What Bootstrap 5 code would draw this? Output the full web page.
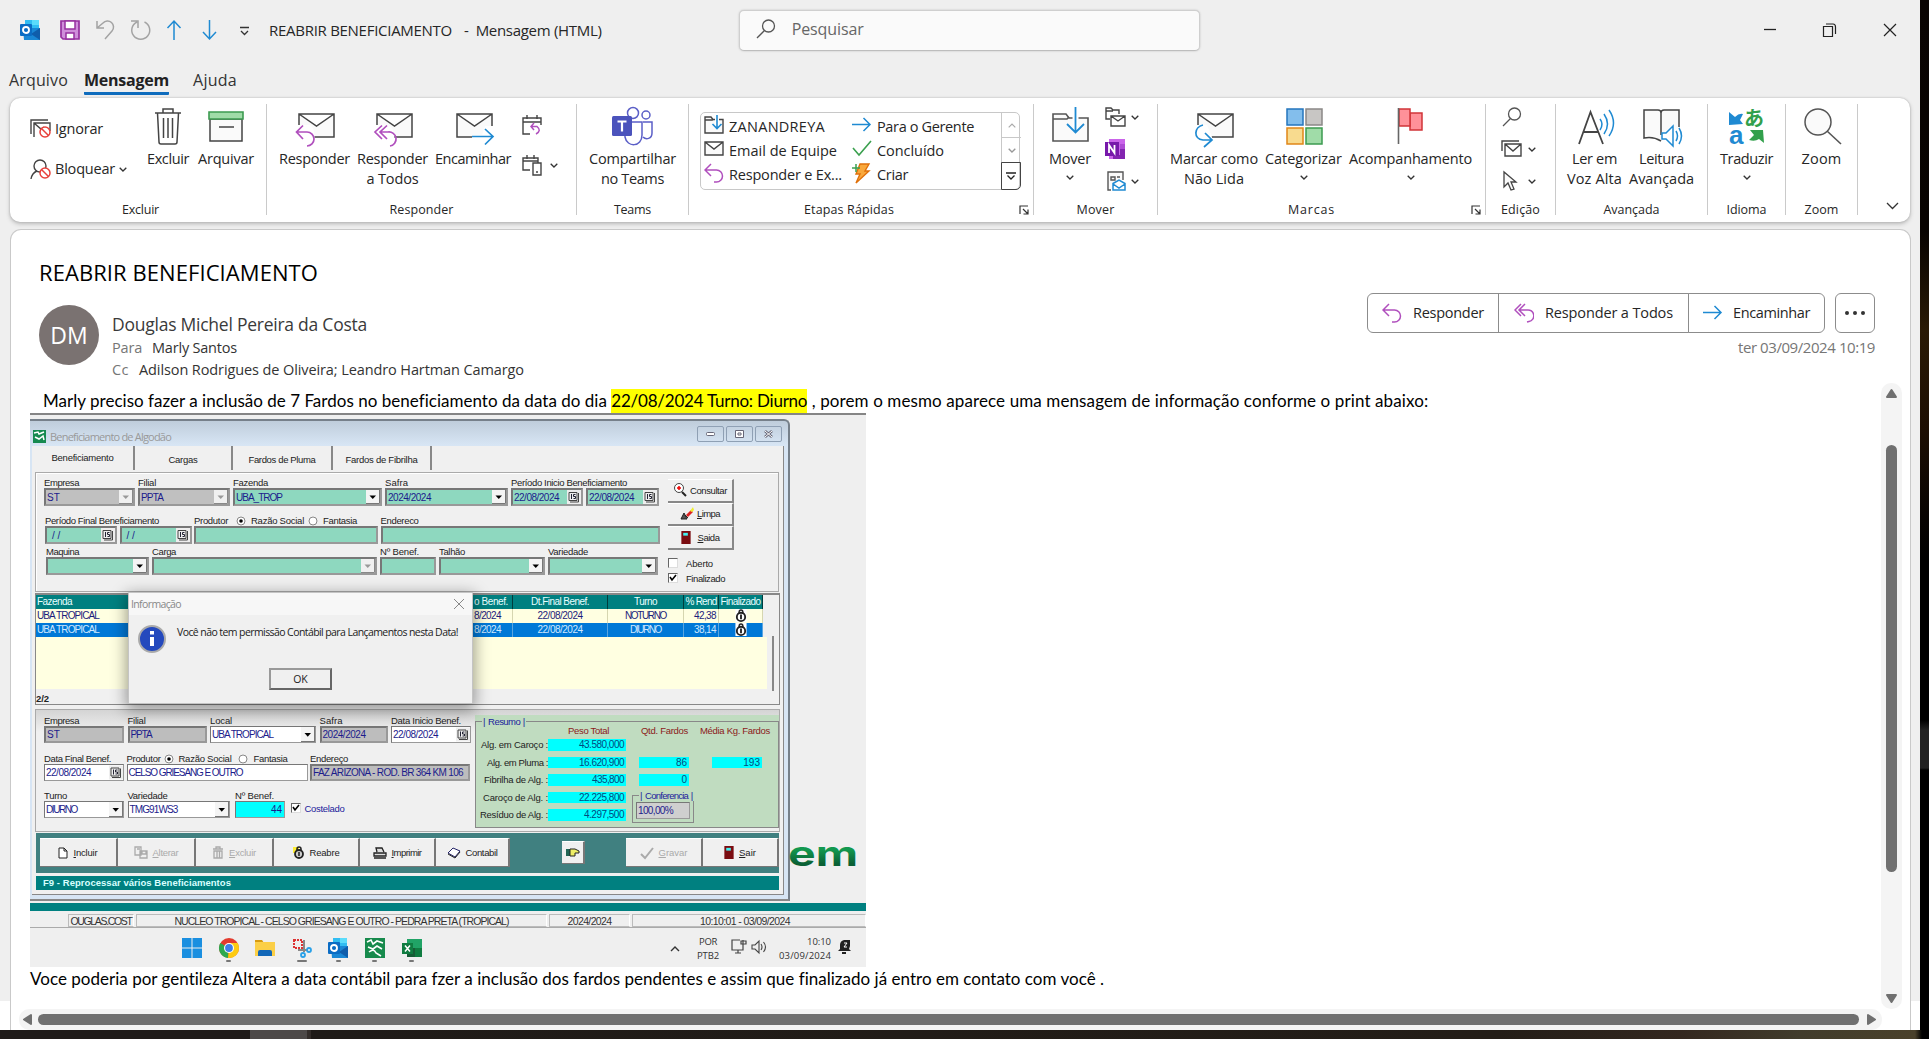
<!DOCTYPE html>
<html lang="pt-BR">
<head>
<meta charset="utf-8">
<title>REABRIR BENEFICIAMENTO - Mensagem (HTML)</title>
<link rel="stylesheet" href="https://cdn.jsdelivr.net/npm/bootstrap@5.3.0/dist/css/bootstrap.min.css">
<script src="https://cdn.jsdelivr.net/npm/bootstrap@5.3.0/dist/js/bootstrap.bundle.min.js"></script>
<style>
body{width:1929px;height:1039px;overflow:hidden;background:#15110f;font-family:"Open Sans","Noto Sans",sans-serif;font-size:15px;line-height:20px;color:#262626}
svg{display:block;flex:none;overflow:visible}
[data-w]{display:inline-block;white-space:pre}
.app{width:1920px;height:1030px;background:linear-gradient(#efefef 1001px,#fff 1001px)}
.edge{width:9px;height:1030px;background:linear-gradient(#0a0402,#080300 230px,#2a1a05 330px,#1d0e02 430px,#070301 520px,#000 560px,#000 720px,#222 730px,#222 768px,#000 770px)}
.deskbar{height:9px;background:linear-gradient(90deg,#1f1b19 250px,#4d4948 250px,#4d4948 307px,#332d2a 307px,#332d2a 311px,#1f1b18 311px,#231d17 1500px,#33271f 1680px,#413c2c 1800px,#4a412b 1915px,#000 1922px)}
.deskbar span{font-size:13px;line-height:14px;margin-left:1793px;padding-top:6px;color:#fff}
.titlebar{height:60px;padding-left:20px}
.titlebar>svg{width:20px;height:20px}
.titlebar>.sv{margin-left:20px}
.titlebar .dash{margin:0 3px 0 8px}
.titlebar .ttl{margin-left:9px}
.finder{width:461px;height:41px;margin-left:137px;border:1px solid #cfcfcf;border-bottom-color:#bdbdbd;border-radius:5px;background:#fafafa;box-shadow:0 0 2px #bbb;color:#666;font-size:16px;padding:0 0 2px 16px}
.tabrow{height:38px;font-size:16px;color:#333;padding-left:9px}
.tabrow div{height:35px;padding-top:10px}
.tabrow .on{font-weight:700;border-bottom:3px solid #0f6cbd;border-radius:1px;color:#222}
.ribbon{width:1900px;height:124px;margin-left:10px;background:#fff;border-radius:10px;box-shadow:0 0 2px #aaa,0 2px 4px #bbb;padding:6px 0 6px 1px}
.grp{height:111px;border-right:1px solid #cacaca;display:flex;flex-direction:column}
.grp .tools{height:97px;padding-top:3px;display:flex;font-size:14.5px}
.cap{font-size:12.5px;line-height:16px;text-align:center;height:16px;position:relative;top:3px}
.cap svg{position:absolute;right:4px;top:3px}
.big{display:flex;flex-direction:column;align-items:center;text-align:center}
.big svg.i{width:40px;height:40px;margin-bottom:2px}
.big svg.c{margin-top:6px}
svg.c{width:8px;height:5px}
.g-ex{width:256px}.g-re{width:310px}.g-te{width:112px}.g-et{width:345px}.g-mo{width:124px}.g-ma{width:328px}.g-ed{width:70px}.g-av{width:152px}.g-id{width:78px}.g-zo{width:72px}
.g-ex .tools{display:grid;grid-template-columns:111px 54px 62px;padding-left:19px}
.g-re .tools{display:grid;grid-template-columns:77px 79px 82px 60px;padding-left:9px}
.g-ma .tools{display:grid;grid-template-columns:98px 81px 133px;padding-left:7px}
.g-mo .tools{display:grid;grid-template-columns:54px 60px;padding-left:9px}
.g-av .tools{display:grid;grid-template-columns:63px 71px;padding-left:7px}
.s20{width:20px;height:20px}
.sm{display:flex;align-items:center;gap:6px}
.steps{width:320px;height:78px;margin:5px 0 0 11px;border:1px solid #c8c8c8;border-radius:5px;display:grid;grid-template-columns:148px 152px 19px}
.steps .st{display:flex;align-items:center;gap:5px;height:24px;padding-left:3px}
.steps .st span{padding-top:4px}
.spin{display:flex;flex-direction:column;border-left:1px solid #c8c8c8;margin-right:-1px}
.spin div{height:25px;border-bottom:1px solid #c8c8c8;display:flex;align-items:center;justify-content:center}
.spin div:last-child{height:28px;border:1px solid #444;margin:-1px 0 -1px -1px;border-radius:0 0 5px 0}
.msg{width:1901px;height:801px;margin:7px 0 0 10px;border:1px solid #c9c9c9;border-bottom:0;border-radius:11px 11px 0 0;background:#fff;overflow:hidden;position:relative}
.subj{font-size:22px;line-height:30px;color:#000;padding:27px 0 1px 28px}
.head{padding:17px 35px 0 28px;height:95px}
.ava{width:60px;height:60px;background:#7a7271;border-radius:50%;color:#fff;font-size:23px;display:flex;align-items:center;justify-content:center}
.who{padding:7px 0 0 13px;color:#333}
.who .nm{font-size:17.5px;line-height:24px;color:#3a3a3a;height:25px}
.who .ln{line-height:22px;height:22px;font-size:14.5px}
.who .gray{margin-right:10px}
.gray{color:#767676}
.acts{height:40px;margin-top:-12px}
.acts .ab{border:1px solid #8c8c8c;height:40px;display:flex;align-items:center;font-size:14.5px;margin-left:-1px;background:#fff;gap:11px;padding:0 14px}
.acts .ab+.ab{padding-left:15px;padding-right:15px}
.acts .ab.fw{padding-left:14px;padding-right:14px;gap:10px}
.acts .ab.more{margin-left:10px;padding:0 8px;width:40px}
.body1{width:1861px;height:626px;font-family:Lato,"Open Sans",sans-serif;font-size:17px;line-height:24px;color:#000}
.ln1{display:flex;padding:6px 0 0 32px;height:30px}
.ln2{padding-left:19px}
.hl{background:#ff0}
.vs{width:21px;height:626px;margin-left:1px;background:#f4f4f4;border-radius:10px;padding:6px 5px;display:flex;flex-direction:column;align-items:center}
.vs .th{width:11px;height:427px;background:#707070;border-radius:6px;margin-top:47px}
.hs{width:1863px;height:21px;margin-left:8px;background:#f4f4f4;border-radius:10px;padding:5px 5px 5px 4px;display:flex;align-items:center}
.hs .th{height:11px;width:1821px;margin:0 8px 0 6px;background:#707070;border-radius:6px}
/* captured desktop inside the message body */
.pic{width:836px;height:554px;margin-left:19px;background:#efefef;border-top:2px solid #858585;font-family:"Liberation Sans",Arial,sans-serif;font-size:9.5px;line-height:11px;color:#222;position:relative}
.win{width:760px;height:482px;margin-top:4px;border-top:2px solid #76808a;border-right:2px solid #76808a;border-bottom:2px solid #888;border-radius:0 6px 0 0;background:linear-gradient(#bfcddb,#d7e5f4 24px)}
.wt{height:25px;padding:5px 6px 0 3px;font:11px/14px "Open Sans",sans-serif;color:#999}
.wbs{display:flex;gap:2px;margin-left:auto}
.wb{width:27px;height:16px;border:1px solid #8fa0b4;border-radius:2px;display:flex;align-items:center;justify-content:center}
.inn{margin:0 4px 0 2px;height:449px;background:#f0f0f0;border-right:1px solid #888;border-bottom:1px solid #888;padding-left:3px}
.tb{height:26px;display:grid;grid-template-columns:100px 98px 100px 99px}
.tb div{border-right:2px solid #888;height:24px;padding-top:8px;text-align:center}
.tb div:first-child{padding-top:6px;padding-right:3px}
.p1{width:744px;height:120px;border:1px solid #aaa;box-shadow:inset 1px 1px #fff;padding:4px 0 0 8px;display:flex}
.p1l{width:624px}
.p1r{padding-top:2px}
.fr{display:grid;height:38px;align-content:start}
.fr.a{grid-template-columns:91px 92px 149px 123px 72px 73px;column-gap:3px}
.fr.b{grid-template-columns:72px 72px 184px 279px;column-gap:2.5px;height:31px;padding-left:1px}
.fr.c3{grid-template-columns:103px 225px 56px 106px 110px;column-gap:3px;padding-left:2px}
.lb{height:11px;white-space:nowrap;display:flex;align-items:center}
.bx{height:18px;border:2px solid;border-color:#777 #999 #999 #777;background:#8ed8bf;color:#1c1c8c;display:flex;align-items:center;justify-content:space-between;padding-left:1px;font-size:10px}
.bx.g{background:#c0c0c0}.bx.w{background:#fff;border-width:1px}.bx.cy{background:#0ff;border-width:1px;justify-content:flex-end;padding-right:2px}
.bx svg{height:100%;width:14px}
.ck{width:10px;height:10px;border:1px solid;border-color:#666 #ddd #ddd #666;background:#fff;flex:none}
.cb{width:66px;height:23.5px;border-right:2px solid #888;border-bottom:2px solid #888;border-top:1px solid #fff;display:flex;align-items:center;justify-content:center;gap:3px}
.tw{width:745px;height:112px;margin-top:1px;border:1px solid #888;border-top-width:2px;display:flex}
.twl{width:730px}
.void{height:52px;width:731px;background:#ffffe1}
.twb{width:2px;height:55px;background:#888;margin:41px 0 0 6px}
.gt{width:727px;display:grid;grid-template-columns:477px 95px 76px 35px 44px;color:#1c1c7c;font-size:10px;line-height:14px}
.gt div{height:14px;text-align:center;background:#ffffe1;border-right:1px solid #d6d6b0;white-space:nowrap;display:flex;justify-content:center}
.gt .h{background:#008080;color:#e8ffff;border-color:#003c3c}
.gt .s{background:#0078d7;color:#cfe8ff;border-color:#5aa5e0}
.gt .l{justify-content:space-between;padding:0 11px 0 1px}
.gt .h.l{padding-right:4px}
.gt .r{justify-content:flex-end;padding-right:2px}
.p2{width:745px;height:123px;margin-top:4px;border:1px solid #aaa;display:flex;padding-left:8px;background:linear-gradient(#d4d4d4,#f0f0f0 22px)}
.p2l{width:427px}
.p2 .fl .bx{height:17px}
.q1{display:grid;grid-template-columns:80px 79px 106px 68px 80px;column-gap:3.5px;margin-top:5px;height:38px}
.q2{display:grid;grid-template-columns:80px 181px 160px;column-gap:2.5px;height:37px}
.q3{display:grid;grid-template-columns:80px 102px 50px 60px;column-gap:3.5px}
.q3 .fl:nth-child(3){padding-left:2px;width:52px}
.q1 .bx.g,.q2 .bx.g{background:#bdbdbd}
.blu{color:#1c1c9c}
.res{width:304px;height:113px;margin:5px 0 0 4px;background:#c0dcc0;padding-top:6px}
.resb{height:107px;border:1px solid #888;position:relative}
.leg{position:absolute;left:6px;top:-6px;color:#1c1c9c;background:#c0dcc0;padding:0 1px;white-space:nowrap}
.rg{display:grid;grid-template-columns:72px 78px 13px 50px 23px 50px;row-gap:6px;margin-top:3px}
.rg div{height:11.5px;text-align:right;white-space:nowrap;line-height:12px}
.cyn{background:#0ff;color:#004a80;padding-right:2px;font-size:10px}
.rh{color:#8b1a1a;padding:3px 8px 0 92px;display:flex}
.cf{position:absolute;left:156px;top:73px;width:62px;height:28px;border:1px solid #888;padding:6px 3px}
.cf .bx{border-width:1px;background:#cfcfcf;height:17px}
.bar{width:743px;height:40px;margin:1px 0 2px 1px;background:#408080;padding:5px 0 6px 4px;display:flex;align-items:flex-start}
.bar .bt{height:29px;background:#f0f0f0;border-right:2px solid #777;border-bottom:1px solid #777;display:flex;align-items:center;justify-content:center;gap:5px;width:78px;border-top:1px solid #fff}
.bar .dis{color:#aaa}
.bar .n1{width:86px}.bar .n2{width:76px}.bar .n3{width:74px}.bar .n4{width:77px}
.bar .hand{width:23px;height:23px;margin:3px 41px 0 52px}
.f9{width:743px;height:14px;background:#008080;margin-left:1px;color:#d8ffff;font-weight:700;line-height:14px;padding-left:7px;margin-top:3px}
.logo{width:76px;padding-top:425px}
.teal{height:8px;background:#008080;margin-top:2px}
.stat{height:14px;margin-top:3px;display:grid;grid-template-columns:36px 66px 411px 81px 234px;column-gap:2px;font-size:10.5px;line-height:13px;color:#333;border-bottom:1px solid #aaa}
.stat div{border:1px solid #bbb;border-right-color:#fff;text-align:center;white-space:nowrap;height:13px}
.task{height:38px;padding-left:152px;display:flex;font:9.5px/14px "Open Sans",sans-serif;color:#333}
.task .ic{width:20px;margin:10px 16.6px 0 0}
.task .ic svg{width:20px;height:20px}
.task .ic i{display:block;height:2px;width:5px;background:#777;margin:2px auto 0;border-radius:1px}
.task .up{margin:17px 16px 0 auto}
.task .lang{width:24px;margin-right:11px;padding-top:7px;text-align:center}
.task .net{margin-top:11px}
.task .snd{margin:11px 12px 0 4px}
.task .clk{width:52px;padding-top:7px;text-align:right}
.task .bell{margin:11px 15px 0 7px}
.dlg{position:absolute;left:98px;top:177px;width:345px;height:112px;background:linear-gradient(#f7f7f7 22px,#f0f0f0 22px);box-shadow:0 4px 14px 2px rgba(0,0,0,.38);font:10.5px/14px "Open Sans",sans-serif;border:1px solid #c4c4c4;color:#222}
.dlg .dh{height:22px;color:#888;padding:0 8px 0 2px}
.dlg .db{padding:10px 0 0 9px;gap:11px}
.dlg .ok{width:63px;height:22px;margin:15px 0 0 140px;border:2px solid;border-color:#999 #666 #666 #999;line-height:18px;text-align:center}
</style>
</head>
<body>
<svg width="0" height="0" class="position-absolute">
<defs>
<symbol id="chev" viewBox="0 0 8 5"><path d="M.7.7 4 4 7.3.7" fill="none" stroke="#333" stroke-width="1.3"/></symbol>
<symbol id="lau" viewBox="0 0 10 10"><path d="M1 9V1h8M4 4l5 5M9 4.500V9H4.500" fill="none" stroke="#333" stroke-width="1.200"/></symbol>
<symbol id="rep" viewBox="0 0 20 20"><path d="M7 1 1 7l6 6M1 7h11.500a6 6 0 0 1 0 12H10" fill="none" stroke="#b04fbd" stroke-width="1.500"/></symbol>
<symbol id="repa" viewBox="0 0 20 20"><path d="M7 1 1 7l6 6M11 1 5 7l6 6M5 7h8a5.500 5.500 0 0 1 2 11.500l-2 .5" fill="none" stroke="#b04fbd" stroke-width="1.500"/></symbol>
<symbol id="arr" viewBox="0 0 20 20"><path d="M0 9.500h18M11.500 3 18 9.500 11.500 16" fill="none" stroke="#1f8ad2" stroke-width="1.500"/></symbol>
<symbol id="env" viewBox="0 0 40 40"><path d="M4 7h35v23H4zM4 7l17.500 12L39 7" fill="#fafafa" stroke="#444" stroke-width="1.500"/></symbol>
<symbol id="mag" viewBox="0 0 20 20"><circle cx="12.500" cy="7" r="6" fill="none" stroke="#555" stroke-width="1.300"/><path d="M8.500 11.500 1 19" stroke="#555" stroke-width="1.300"/></symbol>
<symbol id="no" viewBox="0 0 12 12"><circle cx="6" cy="6" r="5" fill="#fff" stroke="#e8413c" stroke-width="1.500"/><path d="m2.500 2.500 7 7" stroke="#e8413c" stroke-width="1.500"/></symbol>
<symbol id="dd" viewBox="0 0 14 14" preserveAspectRatio="none"><path d="M0 0h14v14H0z" fill="#f4f4f4"/><path d="M13.500 0v13.500H0" fill="none" stroke="#777"/><path d="M3.500 5.500h6.500L6.750 9z" fill="#000"/></symbol>
<symbol id="ddg" viewBox="0 0 14 14" preserveAspectRatio="none"><path d="M0 0h14v14H0z" fill="#f0f0f0"/><path d="M13.500 0v13.500H0" fill="none" stroke="#888"/><path d="M3.500 5.500h6.500L6.750 9z" fill="#999"/></symbol>
<symbol id="dt" viewBox="0 0 14 14"><path d="M-2 0h16v14H-2z" fill="#eee"/><path d="M2 2.500h8v8H2zM11.500 3v9H3" fill="none" stroke="#444"/><path d="M4.500 4v5M8.500 4.500H6.500v2h2v2h-2" fill="none" stroke="#223" stroke-width="1"/></symbol>
<symbol id="door" viewBox="0 0 10 14"><path d="M0 0h10v14H0z" fill="#7a0c10"/><path d="M2 2h5v3H2z" fill="#4ee"/></symbol>
<symbol id="lock" viewBox="0 0 12 14"><rect width="12" height="14" fill="#fff"/><path d="M4 5V3a2 2 0 0 1 4 0v2" fill="none" stroke="#222" stroke-width="1.500"/><circle cx="6" cy="8.500" r="4.500" fill="none" stroke="#222" stroke-width="2"/><path d="M6 6v5" stroke="#222" stroke-width="2"/></symbol>
<symbol id="outl" viewBox="0 0 20 20"><path d="M5 0h14v9H5z" fill="#31bdf2"/><path d="M12 0h7v5h-7z" fill="#5bdcfb"/><path d="M3 8h17v12H4z" fill="#1987d5"/><path d="M11 14l9-6v12z" fill="#0f5dab"/><rect y="4" width="12" height="12" rx="1" fill="#0a6cc4"/><circle cx="6" cy="10" r="3" fill="none" stroke="#fff" stroke-width="1.900"/></symbol>
<symbol id="fold" viewBox="0 0 40 40"><path d="M3 34V7h13l3 4h19v23z" fill="#fafafa" stroke="#555" stroke-width="1.600"/><path d="M3 12h14l2-2" fill="none" stroke="#555" stroke-width="1.600"/><path d="M25.500-1v26" stroke="#fff" stroke-width="6"/><path d="M25.500-1v26M17 17l8.500 8.500L34 17" fill="none" stroke="#1f8ad2" stroke-width="1.800"/></symbol>
<symbol id="folds" viewBox="0 0 20 20"><path d="M1 18V2h6l2 2.500h10V18z" fill="#fafafa" stroke="#444" stroke-width="1.400"/><path d="M1 5h7l1-.5" fill="none" stroke="#444" stroke-width="1.400"/><path d="M13 1v12" stroke="#fff" stroke-width="4"/><path d="M13 0v13.500M8.500 9l4.500 4.500L17.500 9" fill="none" stroke="#1f8ad2" stroke-width="1.600"/></symbol>
</defs>
</svg>
<div class="d-flex">
<div class="app">
  <div class="titlebar d-flex align-items-center">
    <svg viewBox="0 0 20 20"><use href="#outl"/></svg>
    <svg viewBox="0 0 20 20" class="sv"><path d="M1 1h18v18H3l-2-2z" fill="#cf8fda" stroke="#96309f" stroke-width="1.700"/><path d="M5 1h10v8H5zM6 13h8v6H6z" fill="#fff" stroke="#96309f" stroke-width="1.500"/></svg>
    <svg viewBox="0 0 20 20" class="ms-3"><path d="M1 1v7h7M1 8l6-5a6 6 0 0 1 9 8L9 19" fill="none" stroke="#a3a3a3" stroke-width="1.500"/></svg>
    <svg viewBox="0 0 20 20" class="ms-3"><path d="M0 1h7v7M13.500 2A9 9 0 1 1 6 2" fill="none" stroke="#a3a3a3" stroke-width="1.500" transform="translate(-1)"/></svg>
    <svg viewBox="0 0 20 20" class="ms-3"><path d="M6 20V1M-.5 8 6 1l6.500 7" fill="none" stroke="#1f8ad2" stroke-width="1.500"/></svg>
    <svg viewBox="0 0 20 20" class="ms-3"><path d="M5.500 0v19M-1 12l6.500 7 6.500-7" fill="none" stroke="#1f8ad2" stroke-width="1.500"/></svg>
    <svg viewBox="0 0 20 20" class="ms-3"><path d="M0 7.500h9M1 11l3.500 3.500L8 11" fill="none" stroke="#333" stroke-width="1.300"/></svg>
    <div class="ttl"><span data-w="183">REABRIR BENEFICIAMENTO</span><span class="dash"> - </span><span data-w="126">Mensagem (HTML)</span></div>
    <div class="finder d-flex align-items-center"><svg width="20" height="20"><use href="#mag"/></svg><span class="ms-3" data-w="72">Pesquisar</span></div>
    <div class="d-flex ms-auto me-4 gap-5 align-items-center"><svg width="12" height="14"><path d="M1 6.500h12" stroke="#222" stroke-width="1.300"/></svg><svg width="13" height="14"><path d="M.5 3.500h9v10h-9zM3 1h7q2.500 0 2.500 3v7" fill="none" stroke="#222" stroke-width="1.200"/></svg><svg width="12" height="12"><path d="m0 0 12 12M12 0 0 12" stroke="#222" stroke-width="1.200"/></svg></div>
  </div>
  <div class="tabrow d-flex"><div><span data-w="59">Arquivo</span></div><div class="on ms-3"><span data-w="85">Mensagem</span></div><div class="ms-4"><span data-w="44">Ajuda</span></div></div>
  <div class="ribbon d-flex">
    <div class="grp g-ex"><div class="tools">
      <div class="pt-2"><div class="d-flex align-items-center mt-1"><svg width="21" height="20" viewBox="0 0 21 20"><path d="M1 15V1h17M4 18V4h16v8M4 4l7 6 3-2" fill="none" stroke="#444" stroke-width="1.400"/><use href="#no" x="9" y="7" width="12" height="12"/></svg><span class="ms-1" data-w="48">Ignorar</span></div>
      <div class="d-flex align-items-center mt-3 pt-1"><svg width="21" height="20" viewBox="0 0 21 20"><circle cx="10" cy="7" r="6" fill="none" stroke="#444" stroke-width="1.400"/><path d="M1 20q1-6 6-8" fill="none" stroke="#444" stroke-width="1.400"/><use href="#no" x="9" y="8" width="12" height="12"/></svg><span class="mx-1" data-w="60">Bloquear</span><svg class="c"><use href="#chev"/></svg></div></div>
      <div class="big"><svg class="i" viewBox="0 0 40 40"><path d="M7 6h26M15 6V2h10v4M9.500 6 11 35q0 2 2 2h14q2 0 2-2L30.500 6M15.500 11v20M20 11v20M24.500 11v20" fill="none" stroke="#444" stroke-width="1.500"/></svg><span data-w="42">Excluir</span></div>
      <div class="big"><svg class="i" viewBox="0 0 40 40"><path d="M4 12h32v22H4z" fill="#fafafa" stroke="#444" stroke-width="1.500"/><path d="M3 5h34v7H3z" fill="#a0dca8" stroke="#3c9b50" stroke-width="1.600"/><path d="M13 20h15" stroke="#444" stroke-width="1.500"/></svg><span data-w="56">Arquivar</span></div>
    </div><div class="cap ps-1"><span data-w="37">Excluir</span></div></div>
    <div class="grp g-re"><div class="tools">
      <div class="big"><svg class="i" viewBox="0 0 40 40"><use href="#env"/><path d="M0 18h15q6 3 4 20H0z" fill="#fff"/><path d="M8 18.500 1.500 25 8 32M1.500 25H12a7 7 0 0 1 0 14" fill="none" stroke="#b04fbd" stroke-width="1.700"/></svg><span data-w="71">Responder</span></div>
      <div class="big"><svg class="i" viewBox="0 0 40 40"><use href="#env"/><path d="M0 18h15q8 3 6 20H0z" fill="#fff"/><path d="M9 18.500 2 25l7 7M14 18.500 7 25l7 7M7 25h8a7 7 0 0 1 2 14" fill="none" stroke="#b04fbd" stroke-width="1.700"/></svg><span data-w="71">Responder</span><span data-w="52">a Todos</span></div>
      <div class="big"><svg class="i" viewBox="0 0 40 40"><use href="#env"/><path d="M19 28h10l3-9h8v20H19z" fill="#fff"/><path d="M19 29.500h21M32 22l8 7.500-8 8" fill="none" stroke="#1f8ad2" stroke-width="1.700"/></svg><span data-w="76">Encaminhar</span></div>
      <div class="ps-2 pt-2"><svg class="s20" viewBox="0 0 20 20"><path d="M8 19H1V3h18v7M1 7h18M5 0v4M15 0v4" fill="none" stroke="#444" stroke-width="1.400"/><path d="m12 8-3 3.500 3 3.500M9 11.500h6q5 4-1 7.500" fill="none" stroke="#b04fbd" stroke-width="1.500"/></svg><div class="d-flex align-items-center mt-3 pt-1"><svg class="s20" viewBox="0 0 20 20"><path d="M8 15H1V3h15v5M1 6h15M5 0v4M12 0v4M11 8h8v12h-8zM14 17h2" fill="none" stroke="#444" stroke-width="1.400"/></svg><svg class="c ms-2"><use href="#chev"/></svg></div></div>
    </div><div class="cap"><span data-w="64">Responder</span></div></div>
    <div class="grp g-te"><div class="tools justify-content-center"><div class="big"><svg class="i" viewBox="0 0 40 40"><circle cx="21" cy="6" r="5.500" fill="#fff" stroke="#5b5fc7" stroke-width="1.500"/><circle cx="34" cy="8" r="4" fill="#fff" stroke="#5b5fc7" stroke-width="1.500"/><path d="M13 15h17v13c0 12-15 13-17 2zM31 15h9v11c0 6-6 7-9 4" fill="#fff" stroke="#5b5fc7" stroke-width="1.500"/><rect y="9" width="20" height="20" rx="1.500" fill="#4b53bc"/><path d="M5.500 14.500h9M10 14.500v10" stroke="#fff" stroke-width="2.200"/></svg><span data-w="87">Compartilhar</span><span data-w="63">no Teams</span></div></div><div class="cap"><span data-w="37">Teams</span></div></div>
    <div class="grp g-et"><div class="tools"><div class="steps">
      <div><div class="st"><svg class="s20"><use href="#folds"/></svg><span data-w="96">ZANANDREYA</span></div><div class="st"><svg class="s20" viewBox="0 0 20 20"><path d="M1 3h18v13H1zM1 3l9 7 9-7" fill="#fafafa" stroke="#444" stroke-width="1.400"/></svg><span data-w="108">Email de Equipe</span></div><div class="st"><svg class="s20"><use href="#rep"/></svg><span data-w="113">Responder e Ex...</span></div></div>
      <div><div class="st"><svg class="s20"><use href="#arr"/></svg><span data-w="97">Para o Gerente</span></div><div class="st"><svg class="s20"><path d="m1 9 6 7L19 2" fill="none" stroke="#3ba04f" stroke-width="1.600"/></svg><span data-w="67">Concluído</span></div><div class="st"><svg class="s20" viewBox="0 0 20 20"><path d="M8 1h9l-4 7h4L4 20l4-9H4z" fill="#f9a83c" stroke="#e0700a" stroke-width="1.400"/><path d="M0 5h8M4 1v8" stroke="#3ba04f" stroke-width="1.500"/></svg><span data-w="31">Criar</span></div></div>
      <div class="spin"><div><svg width="8" height="5"><path d="M.7 4.300 4 1l3.300 3.300" fill="none" stroke="#aaa" stroke-width="1.200"/></svg></div><div><svg class="c opacity-50"><use href="#chev"/></svg></div><div><svg width="10" height="8"><path d="M0 1h10M1.500 3.500 5 7l3.500-3.500" fill="none" stroke="#222" stroke-width="1.300"/></svg></div></div>
    </div></div><div class="cap"><span class="me-4" data-w="90">Etapas Rápidas</span><svg width="10" height="10"><use href="#lau"/></svg></div></div>
    <div class="grp g-mo"><div class="tools"><div class="big"><svg class="i"><use href="#fold"/></svg><span data-w="42">Mover</span><svg class="c"><use href="#chev"/></svg></div>
      <div class="ps-2 d-flex flex-column gap-2"><div class="sm mb-1"><svg class="s20" viewBox="0 0 20 20"><path d="M5 12H1V1h5l2 2h6v4M1 4h7M6 9h14v10H6zM6 9l7 5 7-5" fill="#fff" stroke="#444" stroke-width="1.400"/></svg><svg class="c"><use href="#chev"/></svg></div><svg class="s20 mb-1" viewBox="0 0 20 20"><path d="M4 0h16v20H4z" fill="#ca64ea"/><path d="M15 5h5v5h-5z" fill="#ae4bd5"/><path d="M15 10h5v10H8v-4h7z" fill="#8325b0"/><rect y="3" width="14" height="14" fill="#7719aa"/><path d="M4 14V6l5.500 8V6" fill="none" stroke="#fff" stroke-width="1.800"/></svg><div class="sm"><svg class="s20" viewBox="0 0 20 20"><path d="M6 19H3V1h15v8M6 6h4v3H6zM12 6h3" fill="#fafafa" stroke="#555" stroke-width="1.400"/><path d="M8 12.500 14 9l6 3.500V19H8zM8 13l6 4 6-4" fill="#fff" stroke="#1f8ad2" stroke-width="1.500"/></svg><svg class="c"><use href="#chev"/></svg></div></div>
    </div><div class="cap"><span data-w="38">Mover</span></div></div>
    <div class="grp g-ma"><div class="tools"><div class="big"><svg class="i" viewBox="0 0 40 40"><use href="#env"/><path d="M0 18h13l5 12v10H0z" fill="#fff"/><path d="M9 18C0 20-1 32 9 33h8M11 26l7 7-8 7" fill="none" stroke="#1f8ad2" stroke-width="1.700"/></svg><span data-w="88">Marcar como</span><span data-w="60">Não Lida</span></div>
      <div class="big"><svg class="i" viewBox="0 0 40 40"><path d="M3 2h16v16H3z" fill="#83beec" stroke="#2476bd" stroke-width="1.500"/><path d="M22 2h16v16H22z" fill="#c8c6c4" stroke="#8a8886" stroke-width="1.500"/><path d="M3 21h16v16H3z" fill="#f8db8f" stroke="#e08719" stroke-width="1.500"/><path d="M22 21h16v16H22z" fill="#a0dca8" stroke="#3c9b50" stroke-width="1.500"/></svg><span data-w="77">Categorizar</span><svg class="c"><use href="#chev"/></svg></div>
      <div class="big"><svg class="i" viewBox="0 0 40 40"><path d="M19 6h12v17H19z" fill="#ff9199" stroke="#d13438" stroke-width="1.500"/><path d="M8 2h11v17H8z" fill="#ff9199" stroke="#d13438" stroke-width="1.500"/><path d="M7.500 1v36" stroke="#666" stroke-width="1.600"/></svg><span data-w="123">Acompanhamento</span><svg class="c"><use href="#chev"/></svg></div>
    </div><div class="cap"><span class="me-3 pe-1" data-w="47">Marcas</span><svg width="10" height="10"><use href="#lau"/></svg></div></div>
    <div class="grp g-ed"><div class="tools flex-column gap-2 ps-3"><svg class="s20 mb-1"><use href="#mag"/></svg><div class="sm mb-1"><svg class="s20" viewBox="0 0 20 20"><path d="M0 12V2h17M3 5h16v12H3zM3 5l8 7 8-7" fill="none" stroke="#444" stroke-width="1.400"/></svg><svg class="c"><use href="#chev"/></svg></div><div class="sm"><svg class="s20" viewBox="0 0 20 20"><path d="M2 1v15l4-4 3 7 3-1-3-7h5z" fill="#fafafa" stroke="#444" stroke-width="1.300"/></svg><svg class="c"><use href="#chev"/></svg></div></div><div class="cap"><span data-w="39">Edição</span></div></div>
    <div class="grp g-av"><div class="tools"><div class="big"><svg class="i" viewBox="0 0 40 40"><path d="M4 37 15.500 5 28 37M8 25h15" fill="none" stroke="#444" stroke-width="1.800"/><path d="M25 12q4 5 0 11M29 7q7 10 0 20M34 3q9 13 0 26" fill="none" stroke="#1f8ad2" stroke-width="1.500"/></svg><span data-w="45">Ler em</span><span data-w="55">Voz Alta</span></div>
      <div class="big"><svg class="i" viewBox="0 0 40 40"><path d="M19 34q-8-5-17-3V3h14q3 0 3 3 0-3 3-3h15v17M19 6v22" fill="#fafafa" stroke="#444" stroke-width="1.500"/><path d="M20 26h4l7-7v20l-7-7h-4z" fill="#fff" stroke="#1f8ad2" stroke-width="1.500"/><path d="M34 24q3 5 0 10M37 21q5 8 0 16" fill="none" stroke="#1f8ad2" stroke-width="1.500"/></svg><span data-w="45">Leitura</span><span data-w="65">Avançada</span></div>
    </div><div class="cap"><span data-w="56">Avançada</span></div></div>
    <div class="grp g-id"><div class="tools justify-content-center"><div class="big"><svg class="i" viewBox="0 0 40 40"><path d="M2 5l6 5q4-4 8-3l-3 6 3 4-14 1z" fill="#1f8ad2"/><path d="M37 36l-5-4q-4 3-10 1l5-5-4-5h13z" fill="#32a04c"/><text x="17" y="19" font-family="Noto Sans CJK JP" font-weight="700" font-size="20" fill="#32a04c">あ</text><text x="2" y="37" font-size="26" font-weight="700" font-family="Liberation Sans" fill="#1f8ad2">a</text></svg><span data-w="53">Traduzir</span><svg class="c"><use href="#chev"/></svg></div></div><div class="cap"><span data-w="40">Idioma</span></div></div>
    <div class="grp g-zo"><div class="tools justify-content-center"><div class="big"><svg class="i" viewBox="0 0 40 40"><circle cx="16" cy="15" r="13" fill="#fafafa" stroke="#555" stroke-width="1.500"/><path d="m25 24 14 13" stroke="#555" stroke-width="1.600"/></svg><span data-w="40">Zoom</span></div></div><div class="cap"><span data-w="34">Zoom</span></div></div>
    <svg class="align-self-end ms-auto me-2 mb-1" width="16" height="10"><path d="m1 1 5.500 5.500L12 1" fill="none" stroke="#333" stroke-width="1.300"/></svg>
  </div>
  <div class="msg">
    <div class="subj"><span data-w="279">REABRIR BENEFICIAMENTO</span></div>
    <div class="head d-flex">
      <div class="ava">DM</div>
      <div class="who"><div class="nm"><span data-w="255">Douglas Michel Pereira da Costa</span></div><div class="ln"><span class="gray" data-w="30">Para</span><span data-w="85">Marly Santos</span></div><div class="ln"><span class="gray" data-w="17">Cc</span><span data-w="385">Adilson Rodrigues de Oliveira; Leandro Hartman Camargo</span></div></div>
      <div class="ms-auto d-flex flex-column align-items-end"><div class="acts d-flex">
        <div class="ab rounded-start"><svg class="s20"><use href="#rep"/></svg><span data-w="71">Responder</span></div><div class="ab"><svg class="s20"><use href="#repa"/></svg><span data-w="128">Responder a Todos</span></div><div class="ab fw rounded-end"><svg class="s20"><use href="#arr"/></svg><span data-w="77">Encaminhar</span></div>
        <div class="ab more rounded"><svg width="22" height="6"><circle cx="3" cy="3" r="2" fill="#333"/><circle cx="11" cy="3" r="2" fill="#333"/><circle cx="19" cy="3" r="2" fill="#333"/></svg></div></div>
        <div class="gray pt-1"><span data-w="137">ter 03/09/2024 10:19</span></div></div>
    </div>
    <div class="d-flex">
      <div class="body1">
        <div class="ln1"><span data-w="568">Marly preciso fazer a inclusão de 7 Fardos no beneficiamento da data do dia </span><span class="hl" data-w="196">22/08/2024 Turno: Diurno</span><span data-w="621"> , porem o mesmo aparece uma mensagem de informação conforme o print abaixo:</span></div>
        <div class="pic">
          <div class="d-flex">
            <div class="win">
              <div class="wt d-flex"><svg width="13" height="13" viewBox="0 0 13 13" class="mt-1"><path d="M0 0h13v13H0z" fill="#168a50"/><path d="m1 3 4-1 1 2 5-2M2 7l4 2 4-3 1 4" fill="none" stroke="#fff" stroke-width="1.500"/></svg><span class="ms-1 mt-1" data-w="121">Beneficiamento de Algodão</span>
                <div class="wbs"><div class="wb"><svg width="9" height="4"><rect x=".5" y=".5" width="8" height="3" rx="1" fill="#fff" stroke="#667"/></svg></div><div class="wb"><svg width="9" height="8"><path d="M.5.5h8v7h-8zM3 3h3v2H3z" fill="#fff" stroke="#667"/></svg></div><div class="wb"><svg width="9" height="8"><path d="m1 1 7 6M8 1 1 7" stroke="#667" stroke-width="2.600"/><path d="m1 1 7 6M8 1 1 7" stroke="#fff" stroke-width="1"/></svg></div></div></div>
              <div class="inn">
                <div class="tb"><div><span data-w="62">Beneficiamento</span></div><div><span data-w="29">Cargas</span></div><div><span data-w="67">Fardos de Pluma</span></div><div><span data-w="72">Fardos de Fibrilha</span></div></div>
                <div class="p1">
                  <div class="p1l">
                    <div class="fr a">
                      <div class="fl"><div class="lb"><span data-w="35">Empresa</span></div><div class="bx g">ST<svg><use href="#ddg"/></svg></div></div>
                      <div class="fl"><div class="lb"><span data-w="18">Filial</span></div><div class="bx g"><span data-w="22">PPTA</span><svg><use href="#ddg"/></svg></div></div>
                      <div class="fl"><div class="lb"><span data-w="35">Fazenda</span></div><div class="bx"><span data-w="46">UBA_TROP</span><svg><use href="#dd"/></svg></div></div>
                      <div class="fl"><div class="lb"><span data-w="23">Safra</span></div><div class="bx"><span data-w="43">2024/2024</span><svg><use href="#dd"/></svg></div></div>
                      <div class="fl"><div class="lb"><span data-w="116">Período Inicio Beneficiamento</span></div><div class="bx"><span data-w="45">22/08/2024</span><svg><use href="#dt"/></svg></div></div>
                      <div class="fl"><div class="lb"></div><div class="bx"><span data-w="45">22/08/2024</span><svg><use href="#dt"/></svg></div></div>
                    </div>
                    <div class="fr b">
                      <div class="fl"><div class="lb"><span data-w="114">Período Final Beneficiamento</span></div><div class="bx"><span class="ms-1">/ /</span><svg><use href="#dt"/></svg></div></div>
                      <div class="fl"><div class="lb"></div><div class="bx"><span class="ms-1">/ /</span><svg><use href="#dt"/></svg></div></div>
                      <div class="fl"><div class="lb"><span data-w="34">Produtor</span><svg class="ms-2 me-1" width="11" height="10"><circle cx="5" cy="5" r="4" fill="#fff" stroke="#888"/><circle cx="5" cy="5" r="1.800"/></svg><span data-w="53">Razão Social</span><svg class="mx-1" width="11" height="10"><circle cx="5" cy="5" r="4" fill="#fff" stroke="#888"/></svg><span data-w="34">Fantasia</span></div><div class="bx"></div></div>
                      <div class="fl"><div class="lb"><span data-w="38">Endereco</span></div><div class="bx"></div></div>
                    </div>
                    <div class="fr c3">
                      <div class="fl"><div class="lb"><span data-w="33">Maquina</span></div><div class="bx"><i></i><svg><use href="#dd"/></svg></div></div>
                      <div class="fl"><div class="lb"><span data-w="24">Carga</span></div><div class="bx"><i></i><svg><use href="#ddg"/></svg></div></div>
                      <div class="fl"><div class="lb"><span data-w="39">Nº Benef.</span></div><div class="bx"></div></div>
                      <div class="fl"><div class="lb"><span data-w="26">Talhão</span></div><div class="bx"><i></i><svg><use href="#dd"/></svg></div></div>
                      <div class="fl"><div class="lb"><span data-w="40">Variedade</span></div><div class="bx"><i></i><svg><use href="#dd"/></svg></div></div>
                    </div>
                  </div>
                  <div class="p1r">
                    <div class="cb"><svg width="14" height="14"><circle cx="6" cy="5" r="4.500" fill="#fff" stroke="#444"/><path d="M6 3v4M4 5h4" stroke="#e00" stroke-width="1.500"/><path d="m9 9 4 4" stroke="#222" stroke-width="2"/></svg><span data-w="37">Consultar</span></div>
                    <div class="cb"><svg width="14" height="13"><path d="M1 12 4 6l3 6zM5 8l3 3" stroke="#222" fill="#555"/><path d="m6 8 5-5 2 2-5 5z" fill="#d22"/><path d="m10 4 3-4 1 3-2 2z" fill="#ee3"/></svg><span data-w="23"><u>L</u>impa</span></div>
                    <div class="cb"><svg width="10" height="13"><use href="#door"/></svg><span class="ms-1" data-w="22"><u>S</u>aida</span></div>
                    <div class="d-flex align-items-center mt-2"><div class="ck"></div><span class="ms-2" data-w="27">Aberto</span></div>
                    <div class="d-flex align-items-center mt-1"><div class="ck"><svg width="8" height="8"><path d="m1 3 2 3 4-5" fill="none" stroke="#000" stroke-width="1.600"/></svg></div><span class="ms-2" data-w="39">Finalizado</span></div>
                  </div>
                </div>
                <div class="tw">
                  <div class="twl">
                    <div class="gt">
                      <div class="h l"><span data-w="35">Fazenda</span><span data-w="34">o Benef.</span></div><div class="h"><span data-w="58">Dt.Final Benef.</span></div><div class="h"><span data-w="23">Turno</span></div><div class="h"><span data-w="31">% Rend</span></div><div class="h"><span data-w="40">Finalizado</span></div>
                      <div class="l"><span data-w="62">UBA TROPICAL</span><span data-w="27">8/2024</span></div><div><span data-w="45">22/08/2024</span></div><div><span data-w="41">NOTURNO</span></div><div class="r"><span data-w="22">42,38</span></div><div><svg width="12" height="13"><use href="#lock"/></svg></div>
                      <div class="s l"><span data-w="62">UBA TROPICAL</span><span data-w="27">8/2024</span></div><div class="s"><span data-w="45">22/08/2024</span></div><div class="s"><span data-w="31">DIURNO</span></div><div class="s r"><span data-w="22">38,14</span></div><div class="s"><svg width="12" height="13"><use href="#lock"/></svg></div>
                    </div>
                    <div class="void"></div>
                    <div class="pt-1 ps-0 fw-bold"><span data-w="13">2/2</span></div>
                  </div>
                  <div class="twb"></div>
                </div>
                <div class="p2">
                  <div class="p2l">
                    <div class="q1">
                      <div class="fl"><div class="lb"><span data-w="35">Empresa</span></div><div class="bx g">ST</div></div>
                      <div class="fl"><div class="lb"><span data-w="18">Filial</span></div><div class="bx g"><span data-w="21">PPTA</span></div></div>
                      <div class="fl"><div class="lb"><span data-w="22">Local</span></div><div class="bx w"><span data-w="61">UBA TROPICAL</span><svg><use href="#dd"/></svg></div></div>
                      <div class="fl"><div class="lb"><span data-w="23">Safra</span></div><div class="bx g"><span data-w="43">2024/2024</span></div></div>
                      <div class="fl"><div class="lb"><span data-w="70">Data Inicio Benef.</span></div><div class="bx w"><span data-w="45">22/08/2024</span><svg><use href="#dt"/></svg></div></div>
                    </div>
                    <div class="q2">
                      <div class="fl"><div class="lb"><span data-w="67">Data Final Benef.</span></div><div class="bx w"><span data-w="45">22/08/2024</span><svg><use href="#dt"/></svg></div></div>
                      <div class="fl"><div class="lb"><span data-w="34">Produtor</span><svg class="mx-1" width="10" height="10"><circle cx="4" cy="5" r="4" fill="#fff" stroke="#888"/><circle cx="4" cy="5" r="1.800"/></svg><span data-w="53">Razão Social</span><svg class="ms-2 me-1" width="10" height="10"><circle cx="3" cy="5" r="4" fill="#fff" stroke="#888"/></svg><span data-w="34">Fantasia</span></div><div class="bx w"><span data-w="114">CELSO GRIESANG E OUTRO</span></div></div>
                      <div class="fl"><div class="lb"><span data-w="38">Endereço</span></div><div class="bx g"><span data-w="150">FAZ ARIZONA - ROD. BR 364 KM 106</span></div></div>
                    </div>
                    <div class="q3">
                      <div class="fl"><div class="lb"><span data-w="23">Turno</span></div><div class="bx w"><span data-w="31">DIURNO</span><svg><use href="#dd"/></svg></div></div>
                      <div class="fl"><div class="lb"><span data-w="40">Variedade</span></div><div class="bx w"><span data-w="48">TMG91WS3</span><svg><use href="#dd"/></svg></div></div>
                      <div class="fl"><div class="lb"><span data-w="39">Nº Benef.</span></div><div class="bx cy">44</div></div>
                      <div class="d-flex align-items-center pt-2 ps-1"><div class="ck"><svg width="8" height="8"><path d="m1 3 2 3 4-5" fill="none" stroke="#000" stroke-width="1.600"/></svg></div><span class="ms-1 blu" data-w="40">Costelado</span></div>
                    </div>
                  </div>
                  <div class="res"><div class="resb"><div class="leg">| <span data-w="32">Resumo</span> |</div>
                    <div class="rh"><span data-w="41">Peso Total</span><span class="ms-auto" data-w="47">Qtd. Fardos</span><span class="ms-2 ps-1" data-w="70">Média Kg. Fardos</span></div>
                    <div class="rg">
                      <div><span data-w="67">Alg. em Caroço :</span></div><div class="cyn"><span data-w="45">43.580,000</span></div><div></div><div></div><div></div><div></div>
                      <div><span data-w="61">Alg. em Pluma :</span></div><div class="cyn"><span data-w="45">16.620,900</span></div><div></div><div class="cyn">86</div><div></div><div class="cyn">193</div>
                      <div><span data-w="64">Fibrilha de Alg. :</span></div><div class="cyn"><span data-w="32">435,800</span></div><div></div><div class="cyn">0</div><div></div><div></div>
                      <div><span data-w="65">Caroço de Alg. :</span></div><div class="cyn"><span data-w="45">22.225,800</span></div><div></div><div></div><div></div><div></div>
                      <div><span data-w="68">Resíduo de Alg. :</span></div><div class="cyn"><span data-w="40">4.297,500</span></div>
                    </div>
                    <div class="cf"><div class="leg">| <span data-w="43">Conferencia</span> |</div><div class="bx"><span data-w="35">100,00%</span></div></div>
                  </div></div>
                </div>
                <div class="bar">
                  <div class="bt"><svg width="10" height="12"><path d="M1 1h5l3 3v7H1zM6 1v3h3" fill="#fff" stroke="#222"/></svg><span data-w="24"><u>I</u>ncluir</span></div>
                  <div class="bt dis"><svg width="14" height="13"><path d="M1 1h6v8H1zM3 3h3M6 5h7v7H6zM8 5v3h4V5" fill="none" stroke="#aaa" stroke-width="1.300"/></svg><span data-w="26"><u>A</u>lterar</span></div>
                  <div class="bt dis"><svg width="12" height="13"><path d="M1 3h10M4 3V1h4v2M2 5h8v7H2zM5 5v7M7.500 5v7" fill="none" stroke="#aaa" stroke-width="1.300"/></svg><span data-w="27"><u>E</u>xcluir</span></div>
                  <div class="bt n1"><svg width="12" height="13"><path d="M0 1h6v6H0z" fill="#fe3"/><path d="M4 5V3a2 2 0 0 1 4 0v2" fill="none" stroke="#222" stroke-width="1.500"/><circle cx="6" cy="8" r="4" fill="#ccc" stroke="#222" stroke-width="1.800"/><path d="M6 6v4" stroke="#222" stroke-width="1.500"/></svg><span data-w="30">Reabre</span></div>
                  <div class="bt n2"><svg width="14" height="12"><path d="M4 5 3 1h6l2 4M1 6h12v3H1zM1 11h12" fill="#ddd" stroke="#222" stroke-width="1.300"/></svg><span data-w="30"><u>I</u>mprimir</span></div>
                  <div class="bt n3"><svg width="14" height="11"><path d="m1 6 5-5 7 3-5 6z" fill="#fff" stroke="#226"/><path d="m1 7 7 4 5-6" fill="none" stroke="#222"/></svg><span data-w="32">Contabil</span></div>
                  <div class="bt hand"><svg width="14" height="9"><path d="M0 1h4v7H0z" fill="#265"/><path d="M4 1h5l4 2v2H9v3H4z" fill="#ee6" stroke="#222"/></svg></div>
                  <div class="bt dis n4"><svg width="14" height="12"><path d="m1 7 4 4L13 1" fill="none" stroke="#aaa" stroke-width="2"/></svg><span data-w="29"><u>G</u>ravar</span></div>
                  <div class="bt n2"><svg width="10" height="13"><use href="#door"/></svg><span data-w="17"><u>S</u>air</span></div>
                </div>
                <div class="f9"><span data-w="188">F9 - Reprocessar vários Beneficiamentos</span></div>
              </div>
            </div>
            <div class="logo"><svg width="70" height="30"><defs><linearGradient id="gg" x2="0" y2="1"><stop offset=".4" stop-color="#12984f"/><stop offset=".75" stop-color="#0a6035"/></linearGradient></defs><text x="-2" y="26" textLength="70" lengthAdjust="spacingAndGlyphs" font-family="Inter,sans-serif" font-weight="700" font-size="34" fill="url(#gg)">em</text></svg></div>
          </div>
          <div class="teal"></div>
          <div class="stat"><div class="border-0"></div><div><span data-w="61">OUGLAS.COST</span></div><div><span data-w="334">NUCLEO TROPICAL - CELSO GRIESANG E OUTRO - PEDRA PRETA (TROPICAL)</span></div><div><span data-w="44">2024/2024</span></div><div class="pe-2"><span data-w="90">10:10:01 - 03/09/2024</span></div></div>
          <div class="task">
            <div class="ic"><svg viewBox="0 0 20 20"><path d="M0 0h9.500v9.500H0zM10.500 0H20v9.500h-9.500zM0 10.500h9.500V20H0zM10.500 10.500H20V20h-9.500z" fill="#1a8fe0"/></svg></div>
            <div class="ic"><svg viewBox="0 0 20 20"><circle cx="10" cy="10" r="10" fill="#e33b2e"/><path d="M10 10 1.300 5A10 10 0 0 0 9 20z" fill="#2da94f"/><path d="M10 10h10a10 10 0 0 1-11 10z" fill="#fdcb12"/><path d="M10 5h8.700A10 10 0 0 1 20 10l-6 1z" fill="#fdcb12"/><circle cx="10" cy="10" r="5" fill="#fff"/><circle cx="10" cy="10" r="3.900" fill="#3f7ee8"/></svg><i></i></div>
            <div class="ic"><svg viewBox="0 0 20 20"><path d="M0 2h7l2 3H0z" fill="#d89b10"/><path d="M0 4h20v14H0z" fill="#fbcf47"/><path d="M3 18v-4q0-2 2-2h10q2 0 2 2v4z" fill="#1267b8"/></svg></div>
            <div class="ic"><svg viewBox="0 0 20 20"><path d="M2 2h8v8H2z" fill="none" stroke="#d33" stroke-width="2" stroke-dasharray="2 1"/><path d="M12 2v12M6 12h9" stroke="#888" stroke-width="2"/><circle cx="17" cy="12" r="2" fill="none" stroke="#28a0e8" stroke-width="1.800"/><circle cx="11" cy="17" r="2" fill="none" stroke="#28a0e8" stroke-width="1.800"/></svg><i class="w-50"></i></div>
            <div class="ic"><svg><use href="#outl"/></svg><i></i></div>
            <div class="ic"><svg viewBox="0 0 20 20"><path d="M0 0h20v20H0z" fill="#178a4c"/><path d="m2 4 4-2 2 4 4-3 6 2M3 9l5 2 4-3 5 3M4 14q5-4 7 1l5 3" fill="none" stroke="#fff" stroke-width="1.600"/></svg><i></i></div>
            <div class="ic"><svg viewBox="0 0 20 20"><path d="M5 1h15v18H5z" fill="#21a366"/><path d="M12 10h8v9h-8z" fill="#107c41"/><path d="M5 10h8v9H5z" fill="#185c37"/><rect y="5" width="11" height="11" fill="#107c41"/><path d="m3 7.500 5 6M8 7.500l-5 6" stroke="#fff" stroke-width="1.500"/></svg><i></i></div>
            <svg class="up" width="10" height="8"><path d="m1 6 4-4 4 4" fill="none" stroke="#333" stroke-width="1.400"/></svg>
            <div class="lang"><span data-w="18">POR</span><span data-w="22">PTB2</span></div>
            <svg width="16" height="16" viewBox="0 0 16 16" class="net"><path d="M9 1H1v10h11V7M4 14h6M7 11v3M12 1v6M10 2h5v3h-5z" fill="none" stroke="#444" stroke-width="1.200"/></svg>
            <svg width="16" height="16" viewBox="0 0 16 16" class="snd"><path d="M1 6h3l4-4v12l-4-4H1zM10 5q2 3 0 6M12.500 3q4 5 0 10" fill="none" stroke="#444" stroke-width="1.100"/></svg>
            <div class="clk"><span data-w="24">10:10</span><span data-w="52">03/09/2024</span></div>
            <svg width="13" height="15" viewBox="0 0 13 15" class="bell"><path d="M2 10V6q0-4 4-5h6v6l-1 3 2 2H0z" fill="#222"/><path d="M4 13h4v2H4z" fill="#222"/><path d="M6 4h3L6 8h3" fill="none" stroke="#fff"/></svg>
          </div>
          <div class="dlg"><div class="dh d-flex justify-content-between align-items-center"><span data-w="50">Informação</span><svg width="10" height="10"><path d="m0 0 10 10M10 0 0 10" stroke="#888"/></svg></div>
            <div class="db d-flex align-items-start"><svg width="28" height="28"><circle cx="14" cy="14" r="13" fill="#2449bd" stroke="#aaa" stroke-width="2"/><path d="M14 12v9M14 6v3.500" stroke="#fff" stroke-width="4"/></svg><span data-w="281">Você não tem permissão Contábil para Lançamentos nesta Data!</span></div>
            <div class="ok">OK</div></div>
        </div>
        <div class="ln2"><span data-w="1074">Voce poderia por gentileza Altera a data contábil para fzer a inclusão dos fardos pendentes e assim que finalizado já entro em contato com você .</span></div>
      </div>
      <div class="vs ms-auto me-2"><svg width="11" height="9"><path d="M5.500 1 10 8H1z" fill="#707070" stroke="#707070" stroke-linejoin="round" stroke-width="2"/></svg><div class="th"></div><svg class="mt-auto" width="11" height="9"><path d="M5.500 8 10 1H1z" fill="#707070" stroke="#707070" stroke-linejoin="round" stroke-width="2"/></svg></div>
    </div>
    <div class="hs"><svg width="9" height="11"><path d="M1 5.500 8 1v9z" fill="#707070" stroke="#707070" stroke-linejoin="round" stroke-width="2"/></svg><div class="th"></div><svg width="9" height="11"><path d="M8 5.500 1 1v9z" fill="#707070" stroke="#707070" stroke-linejoin="round" stroke-width="2"/></svg></div>
  </div>
</div>
<div class="edge"></div>
</div>
<div class="deskbar d-flex overflow-hidden"><span>17:21</span></div>
<script>
/* set each label to its measured width by tracking */
document.querySelectorAll('[data-w]').forEach(function(e){
  var n=e.textContent.length,s=getComputedStyle(e),w=e.getBoundingClientRect().width-parseFloat(s.paddingLeft)-parseFloat(s.paddingRight);
  e.style.letterSpacing=((+e.dataset.w-w)/n).toFixed(3)+'px';
});
</script>
</body>
</html>
